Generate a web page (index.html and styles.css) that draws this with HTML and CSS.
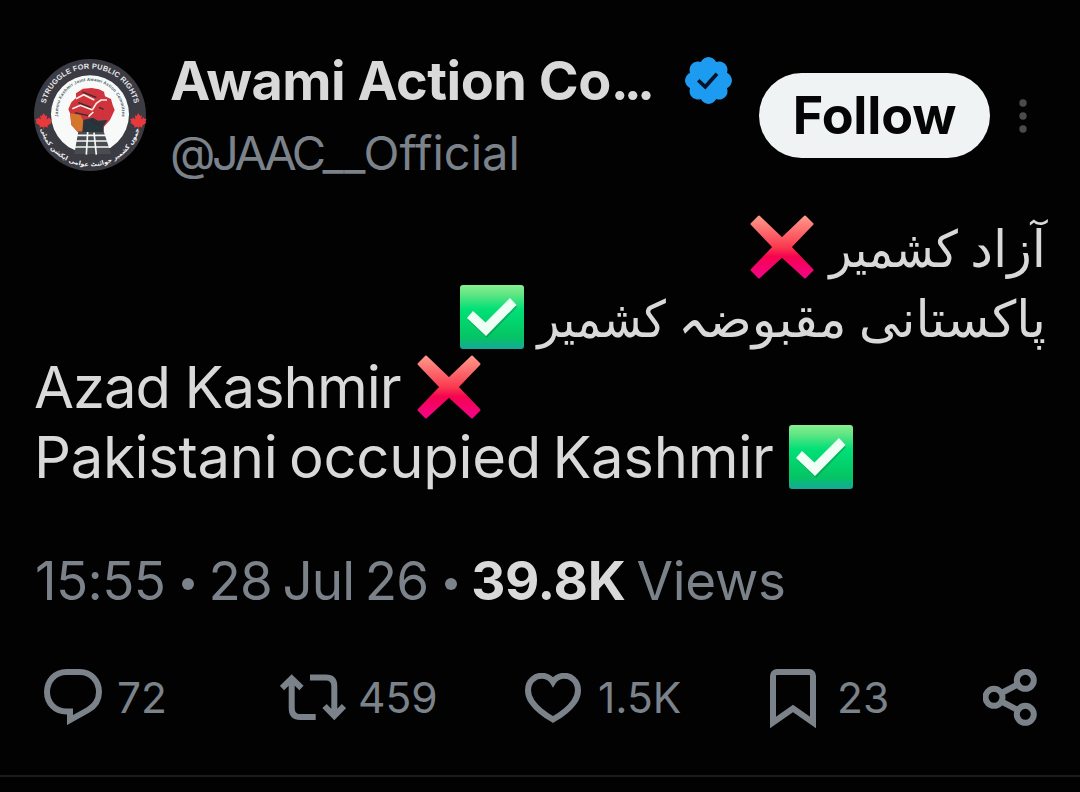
FILE: index.html
```html
<!DOCTYPE html>
<html lang="en">
<head>
<meta charset="utf-8">
<title>Post</title>
<link rel="stylesheet" href="styles.css">
</head>
<body>
<svg class="defs" width="0" height="0" aria-hidden="true">
  <defs>
    <linearGradient id="red" x1="0" y1="0" x2="0" y2="64" gradientUnits="userSpaceOnUse"><stop offset="0" stop-color="#ff9d8c"/><stop offset=".5" stop-color="#fb3a50"/><stop offset=".65" stop-color="#f4044f"/><stop offset="1" stop-color="#f4048c"/></linearGradient>
    <linearGradient id="green" x1="0" y1="0" x2="0" y2="1"><stop offset="0" stop-color="#86f08e"/><stop offset=".15" stop-color="#5fe583"/><stop offset=".38" stop-color="#00e077"/><stop offset=".82" stop-color="#05c463"/><stop offset="1" stop-color="#15a799"/></linearGradient>
    <symbol id="cross" viewBox="0 0 64 64"><path d="M9 1.500 32 23.500 55 1.500 62.500 9 40.500 32 62.500 55 55 62.500 32 41.500 9 62.500 1.500 55 23.500 32 1.500 9Z" fill="url(#red)" stroke="url(#red)" stroke-width="2" stroke-linejoin="round"/></symbol>
    <symbol id="check" viewBox="0 0 64 64"><rect width="64" height="64" rx="3" fill="url(#green)"/><path d="M8 35 14 28 26 39 50 15 57 22 27 53Z" fill="#078c4c" opacity=".5"/><path d="M7 33 13 26 25.500 37.500 50 13 56.500 20 26 51Z" fill="#f0fff5"/></symbol>
  </defs>
</svg>
<main class="post">
  <header class="head">
    <svg class="avatar" viewBox="24 24 342 342">
      <defs>
        <path id="arc-top" d="M58 193A137 137 0 0 1 332 193"/>
        <path id="arc-mid" d="M101 208A96 96 0 1 1 289 208"/>
        <path id="arc-low" d="M43 220A154 154 0 0 0 347 220"/>
        <path id="leaf" d="M0-31 7-19 14-22 12-5 22-14 24-8 33-7 28 3 32 8 15 20 17 27 2 24 1 34-1 34-2 24-17 27-15 20-32 8-28 3-33-7-24-8-22-14-12-5-14-22-7-19Z"/>
      </defs>
      <circle cx="195" cy="195" r="168" fill="#3b3b44"/>
      <circle cx="195" cy="193" r="117" fill="#f8fafa"/>
      <use href="#leaf" transform="translate(56 212) scale(.75)" fill="#e83a3c"/>
      <use href="#leaf" transform="translate(340 212) scale(.75)" fill="#e83a3c"/>
      <path d="M160 244H236L258 312H148Z" fill="#4a4d4f"/>
      <path d="M150 256H244M146 273H254M142 291H258M188 246 184 314M207 248 214 314" stroke="#f4f7f7" stroke-width="5"/>
      <path d="M135 190 130 178 139 157 153 144 153 130 174 116 200 114 222 118 237 125 240 139 258 147 263 165 269 180 255 210 237 230 236 246H158L139 225Z" fill="#cf333b"/>
      <path d="M136 190 166 195 177 216 174 243 157 243 139 224Z" fill="#d4772c"/>
      <path d="M175 210 203 203 220 212 247 210 235 229 235 246H172Z" fill="#27363c"/>
      <path d="M153 146 176 134 208 150M142 176 166 166 203 180M203 178 214 160 228 150 246 150M190 200 205 186" fill="none" stroke="#faf0ea" stroke-width="5"/>
      <path d="M160 158 198 172M172 126 214 142M150 188 190 197M222 172 236 178M196 212 226 226" fill="none" stroke="#352b32" stroke-width="4"/>
      <text class="seal-top"><textPath href="#arc-top" startOffset="50%" textLength="366">STRUGGLE FOR PUBLIC RIGHTS</textPath></text>
      <text class="seal-mid"><textPath href="#arc-mid" startOffset="50%" textLength="324">Jammu Kashmir Joint Awami Action Committee</textPath></text>
      <text class="seal-low" direction="rtl"><textPath href="#arc-low" startOffset="50%">جموں کشمیر جوائنٹ عوامی ایکشن کمیٹی</textPath></text>
    </svg>
    <div class="who">
      <div class="name-row">
        <span class="name">Awami Action Co<span class="ellipsis">...</span></span>
        <svg class="badge" viewBox="1.6 1.6 18.8 18.8"><path fill="#1d9bf0" d="M20.396 11c-.018-.646-.215-1.275-.57-1.816-.354-.54-.852-.972-1.438-1.246.223-.607.27-1.264.14-1.897-.131-.634-.437-1.218-.882-1.687-.47-.445-1.053-.75-1.687-.882-.633-.13-1.29-.083-1.897.14-.273-.587-.704-1.086-1.245-1.44S11.647 1.62 11 1.604c-.646.017-1.273.213-1.813.568s-.969.854-1.24 1.44c-.608-.223-1.267-.272-1.902-.14-.635.13-1.22.436-1.69.882-.445.47-.749 1.055-.878 1.688-.13.633-.08 1.29.144 1.896-.587.274-1.087.705-1.443 1.245-.356.54-.555 1.17-.574 1.817.02.647.218 1.276.574 1.817.356.54.856.972 1.443 1.245-.224.606-.274 1.263-.144 1.896.13.634.433 1.218.877 1.688.47.443 1.054.747 1.687.878.633.132 1.29.084 1.897-.136.274.586.705 1.084 1.246 1.439.54.354 1.17.551 1.816.569.647-.016 1.276-.213 1.817-.567s.972-.854 1.245-1.44c.604.239 1.266.296 1.903.164.636-.132 1.22-.447 1.68-.907.46-.46.776-1.044.908-1.681s.075-1.299-.165-1.903c.586-.274 1.084-.705 1.439-1.246.354-.54.551-1.17.569-1.816z"/><path d="M6.900 10.900 9.700 13.500 14.400 8.300" fill="none" stroke="#03142a" stroke-width="1.500"/></svg>
      </div>
      <div class="handle"><span class="handle-caps">@JAAC</span>__Official</div>
    </div>
    <button class="follow"><span>Follow</span></button>
    <svg class="more" viewBox="0 0 8 34"><circle cx="4" cy="4" r="3.700"/><circle cx="4" cy="17" r="3.700"/><circle cx="4" cy="30" r="3.700"/></svg>
  </header>
  <section class="body">
    <p class="line urdu first" dir="rtl"><span class="words">آزاد <span class="narrow">کشمیر</span></span><svg class="emoji"><use href="#cross"/></svg></p>
    <p class="line urdu" dir="rtl"><span class="words">پاکستانی مقبوضہ <span class="narrow">کشمیر</span></span><svg class="emoji"><use href="#check"/></svg></p>
    <p class="line short"><span>Azad Kashmir</span><svg class="emoji"><use href="#cross"/></svg></p>
    <p class="line long"><span>Pakistani occupied Kashmir</span><svg class="emoji"><use href="#check"/></svg></p>
  </section>
  <div class="meta"><span class="time">15:55</span><i class="dot"></i><span class="date">28 Jul 26</span><i class="dot"></i><b class="num">39.8K</b><span class="views">Views</span></div>
  <footer class="actions">
    <div class="action reply"><svg width="58" height="56" viewBox="0 0 58 56"><path d="M22.500 3H36C47 3 55 12 55 23C55 31 51 37 44 41L26 51V42.500H22.500C11 42.500 3 34 3 23C3 12 11 3 22.500 3Z"/></svg><span>72</span></div>
    <div class="action repost"><svg width="66" height="48" viewBox="0 0 66 48"><path d="M2 14 11.700 4.500 21.500 14M11.700 5V34Q11.700 43 20 43H35.700M30 3.500H46Q54.300 3.500 54.300 12V42M44.500 32 54.300 42 64 32"/></svg><span>459</span></div>
    <div class="action like"><svg width="56" height="50" viewBox="0 0 56 50"><path d="M28 9C23 1 13 1.500 8 6C1 12 2 22 7 29C12 36 20 42 28 46.500C36 42 44 36 49 29C54 22 55 12 48 6C43 1.500 33 1 28 9Z"/></svg><span>1.5K</span></div>
    <div class="action save"><svg width="46" height="60" viewBox="0 0 46 60"><path d="M3 53.500V7A4 4 0 0 1 7 3H39A4 4 0 0 1 43 7V53.500L23 39.500Z"/></svg><span>23</span></div>
    <div class="action share"><svg width="54" height="57" viewBox="0 0 54 57"><circle cx="42.300" cy="11.300" r="8.500"/><circle cx="11" cy="28.300" r="8.500"/><circle cx="42.300" cy="45.300" r="8.500"/><path d="M18.500 24 34.800 15.500M18.500 32.500 34.800 41"/></svg></div>
  </footer>
</main>
</body>
</html>
```
FILE: styles.css
```css
* { box-sizing: border-box; }
body { margin: 0; background: #020202; font-family: Inter, "Liberation Sans", sans-serif; color: #d9d9d9; }
.defs { position: absolute; }
.post { width: 1080px; height: 777px; padding: 50px 0 0 33px; border-bottom: 2px solid #1b1b1b; display: flex; flex-direction: column; white-space: nowrap; }
.head { height: 162px; display: flex; align-items: flex-start; }
.avatar { width: 114px; height: 114px; margin-top: 8px; flex: none; }
.seal-top { font: 700 22px "Liberation Sans", sans-serif; fill: #e8e8ea; text-anchor: middle; }
.seal-mid { font: 700 13px "Liberation Sans", sans-serif; fill: #38575c; text-anchor: middle; }
.seal-low { font: 700 19px "DejaVu Sans", sans-serif; fill: #f3f3f3; text-anchor: middle; }
.who { width: 589px; margin-left: 23px; flex: none; }
.name-row { height: 62px; display: flex; }
.name { width: 515px; font-size: 54px; font-weight: 700; line-height: 62px; letter-spacing: -0.5px; }
.ellipsis { letter-spacing: -5px; }
.badge { width: 47px; height: 47px; margin-top: 7px; flex: none; }
.handle { font-size: 47px; line-height: 56px; margin-top: 13px; color: #7b828a; letter-spacing: 0; }
.handle-caps { letter-spacing: -3.4px; }
.follow { width: 231px; height: 85px; margin-top: 23px; flex: none; border: 0; border-radius: 43px; background: #eff3f4; color: #050505; font: 700 52px/85px Inter, sans-serif; letter-spacing: -0.2px; padding: 0; }
.more { width: 8px; height: 34px; margin: 49px 0 0 29px; fill: #4b4b4d; }
.body { height: 339px; padding-right: 34px; }
.line { display: flex; align-items: center; height: 70px; margin: 0; font-size: 58px; line-height: 70px; }
.short { letter-spacing: -1px; word-spacing: -1px; padding-left: 1px; }
.long { letter-spacing: -0.3px; word-spacing: -4.5px; padding-left: 1px; }
.urdu { font-family: "DejaVu Sans", sans-serif; font-size: 51px; word-spacing: -4px; }
.words { margin-top: 6px; }
.narrow { display: inline-block; transform: scaleX(.9); transform-origin: right; margin-left: -18px; }
.emoji { width: 64px; height: 64px; margin-inline-start: 17px; flex: none; }
.short .emoji, .long .emoji { margin-inline-start: 16px; }
.first .emoji { margin-inline-start: 19px; }
.meta { height: 60px; display: flex; align-items: center; font-size: 53px; line-height: 60px; color: #7b828a; padding-left: 2px; }
.time { letter-spacing: -0.6px; }
.date { letter-spacing: -0.9px; word-spacing: -3.4px; }
.dot { width: 12px; height: 12px; border-radius: 50%; background: #7b828a; margin: 6px 14px 0 17px; flex: none; }
.num { color: #d9d9d9; letter-spacing: -0.3px; }
.views { margin-left: 11px; letter-spacing: -0.3px; }
.actions { display: grid; grid-template-columns: 236px 245px 245px 213px 60px; height: 60px; margin: 58px 0 0 11px; }
.action { display: flex; align-items: flex-start; font-size: 42.5px; line-height: 58px; color: #7b828a; }
.action svg { fill: none; stroke: #7b828a; stroke-width: 6; flex: none; }
.action span { margin-left: 15px; }
.repost svg { margin-top: 5px; }
.action.repost span { margin-left: 12px; }
.like svg { margin-top: 4px; }
.action.like span { margin-left: 17px; }
.action.save span { margin-left: 21px; }
```
